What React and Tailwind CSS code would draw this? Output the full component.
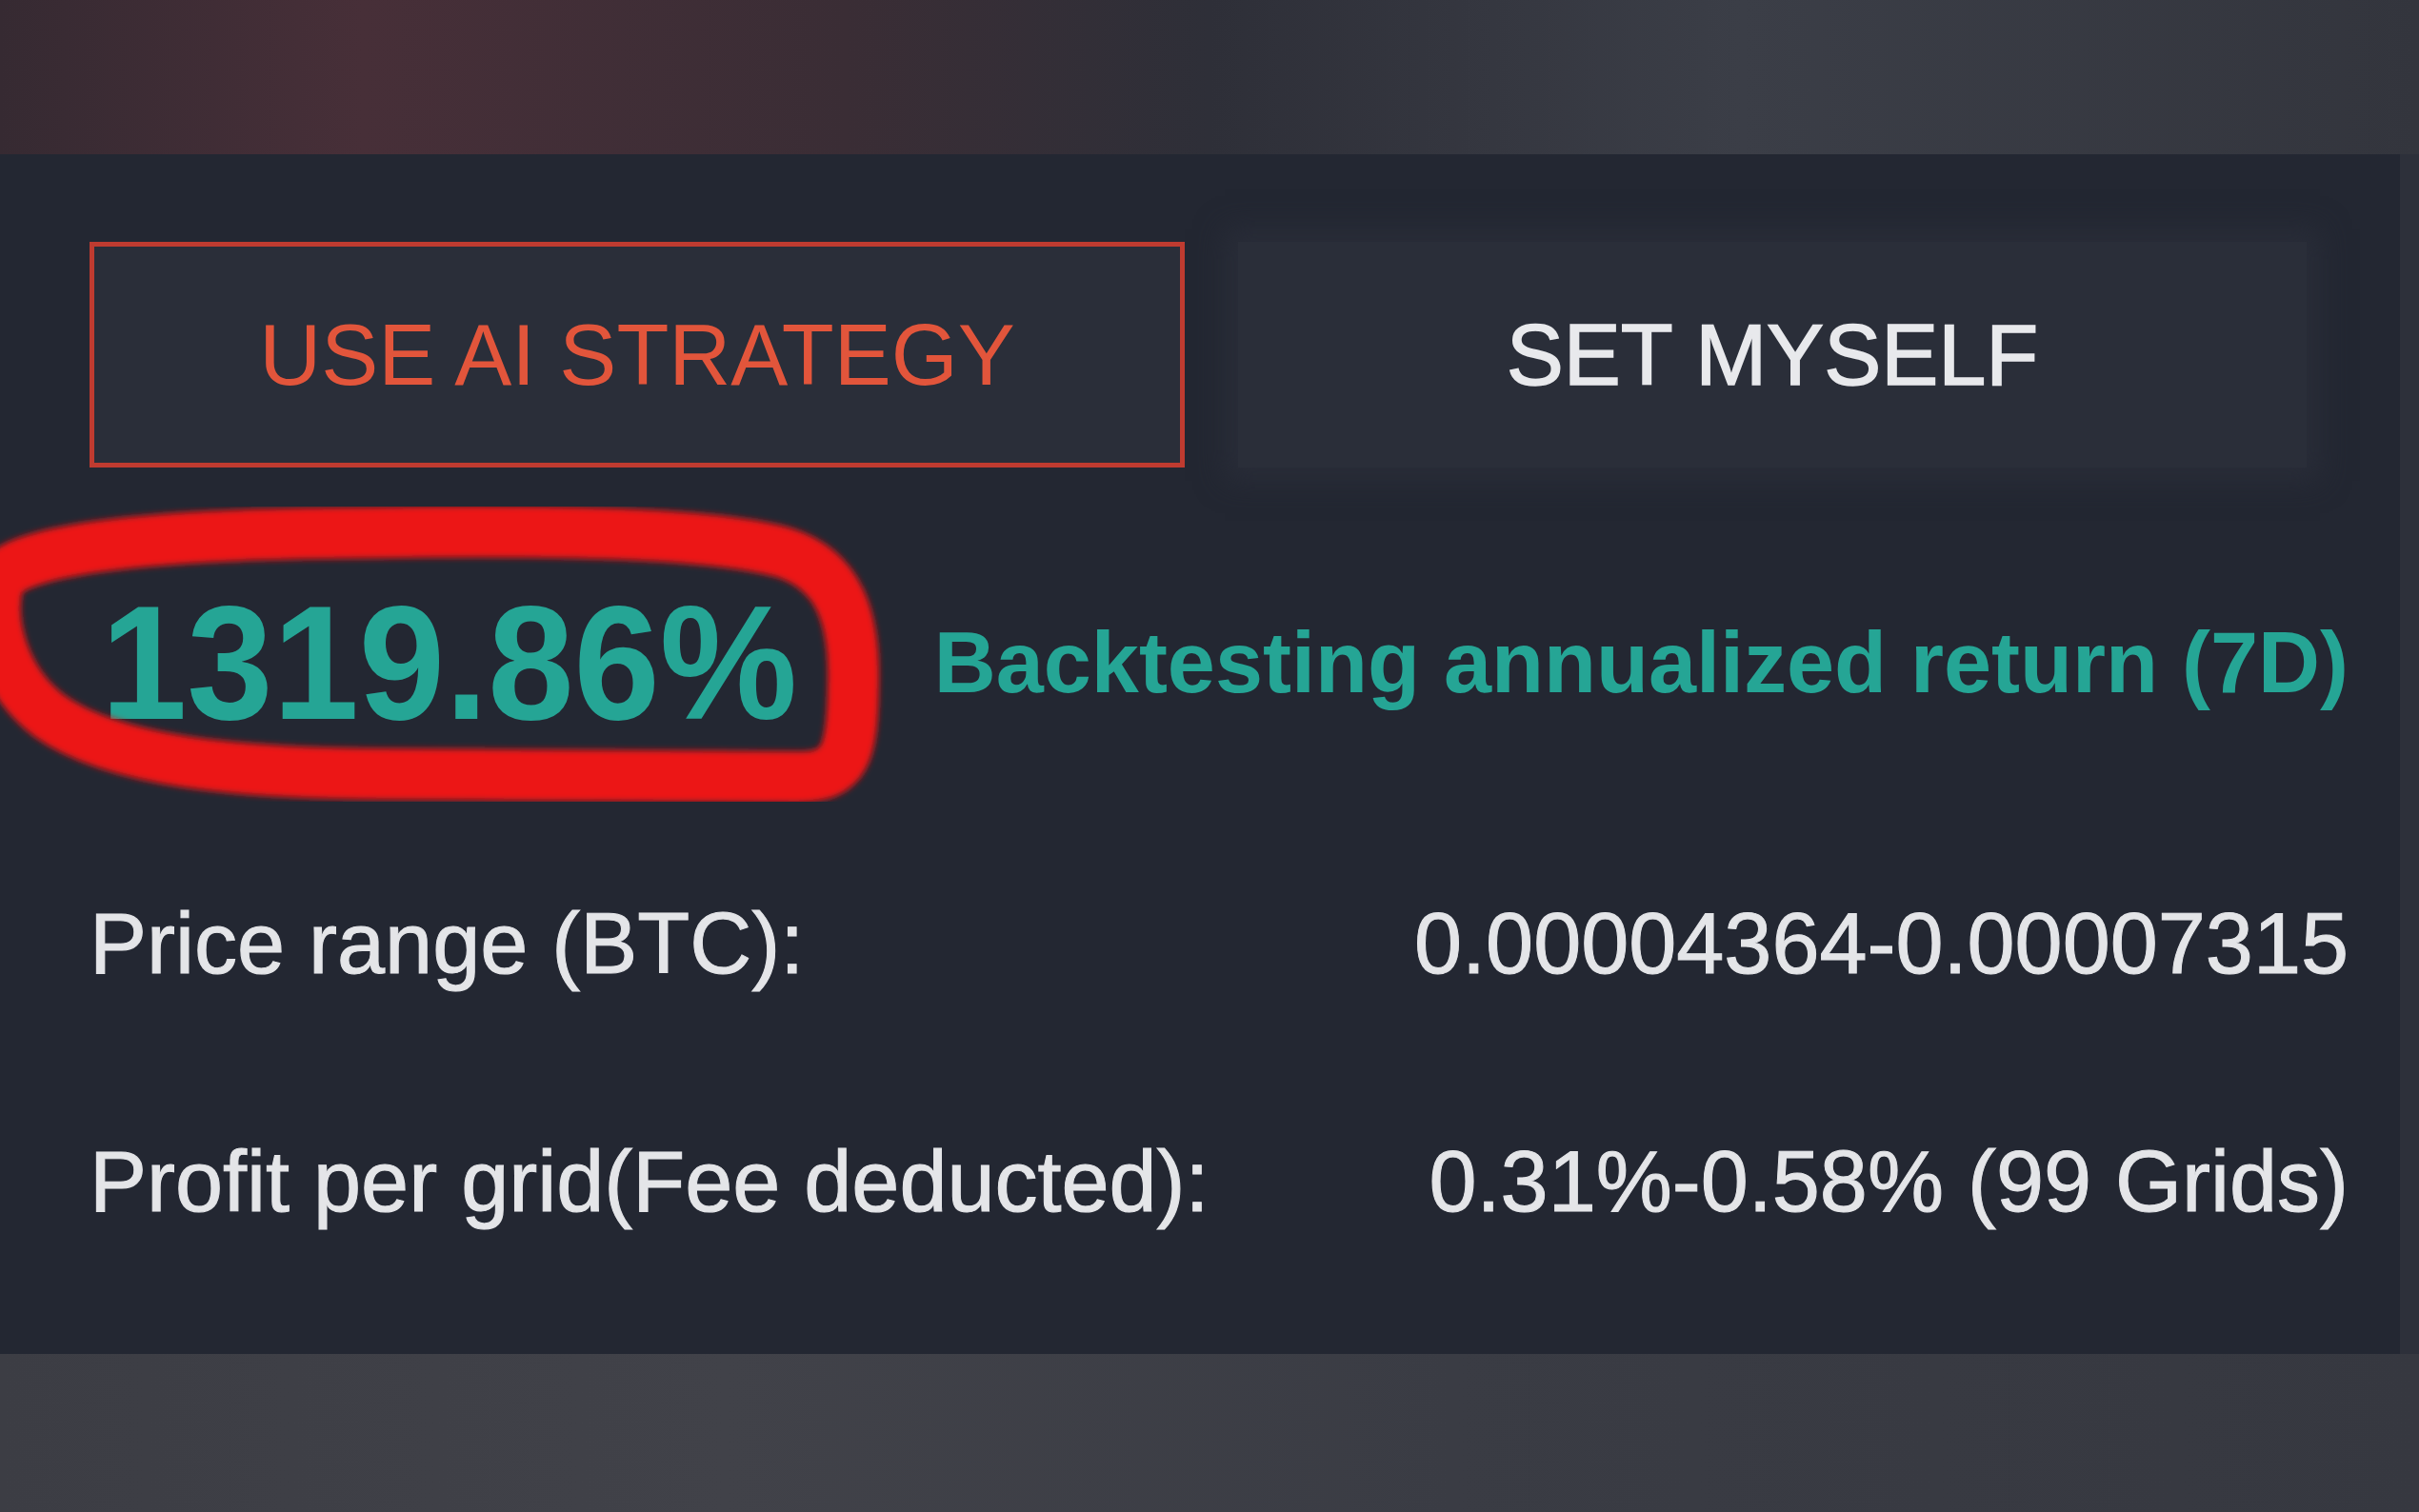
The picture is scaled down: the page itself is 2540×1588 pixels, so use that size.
import React from 'react'

const font = { fontFamily: '"Liberation Sans", Arial, sans-serif' }

function Row({ label, value }) {
  return (
    <div className="flex items-center justify-between text-[90px] leading-none text-[#e4e5e8] [-webkit-text-stroke:1px_#e4e5e8]">
      <span>{label}</span>
      <span>{value}</span>
    </div>
  )
}

// hand-drawn red circle around the return figure
function Scribble() {
  return (
    <svg
      className="pointer-events-none absolute left-0 top-0"
      width="2540"
      height="1260"
      viewBox="0 162 2540 1260"
    >
      <defs>
        <filter id="soft" x="-10%" y="-10%" width="120%" height="120%">
          <feGaussianBlur stdDeviation="3" />
        </filter>
      </defs>
      <path
        d="M 345 560 C 560 556, 740 558, 822 580 C 882 598, 898 650, 896 720 C 895 792, 888 816, 838 816 L 400 813 C 250 812, 120 800, 52 752 C 2 714, -12 652, -2 612 C 10 578, 150 562, 345 560 Z"
        fill="none"
        stroke="#ec1317"
        strokeWidth="54"
        strokeLinecap="round"
        strokeLinejoin="round"
        filter="url(#soft)"
      />
    </svg>
  )
}

export default function App() {
  return (
    <div className="flex h-[1588px] w-full flex-col bg-[#2f323b]" style={font}>
      <div className="h-[162px] bg-[linear-gradient(90deg,#362a32_0%,#472f38_15%,#3a2d35_35%,#2e2f38_50%,#3b3e47_72%,#33353d_100%)]" />

      <div className="flex">
        <div className="relative h-[1260px] w-[2520px] bg-[#232732] pl-[94px] pr-[54px] pt-[92px]">
          <div className="flex">
            <button
              type="button"
              className="flex h-[237px] w-[1150px] items-center justify-center border-[5px] border-[#bf3b30] bg-[#2a2e39] text-[90px] leading-none text-[#e2553b]"
            >
              USE AI STRATEGY
            </button>
            <button
              type="button"
              className="ml-[56px] flex h-[237px] w-[1122px] items-center justify-center bg-[#2a2e39] text-[90px] leading-none text-[#e8e9ec] shadow-[0_0_28px_14px_rgba(42,46,57,0.85)] [-webkit-text-stroke:1.5px_#e8e9ec]"
            >
              SET MYSELF
            </button>
          </div>

          <div className="mt-[120px] flex items-center justify-between">
            <span className="ml-[12px] inline-block origin-left scale-x-[0.955] text-[170px] font-bold leading-none text-[#25a595]">
              1319.86%
            </span>
            <span className="text-[90px] font-bold leading-none text-[#25a595]">
              Backtesting annualized return (7D)
            </span>
          </div>

          <div className="mt-[165px] flex flex-col gap-[160px]">
            <Row label="Price range (BTC):" value="0.00004364-0.00007315" />
            <Row label="Profit per grid(Fee deducted):" value="0.31%-0.58% (99 Grids)" />
          </div>

          <Scribble />
        </div>
        <div className="flex-1 bg-[#2d303a]" />
      </div>

      <div className="flex-1 bg-[linear-gradient(90deg,#3c3d44_0%,#414249_30%,#3a3c44_60%,#363840_100%)]" />
    </div>
  )
}
